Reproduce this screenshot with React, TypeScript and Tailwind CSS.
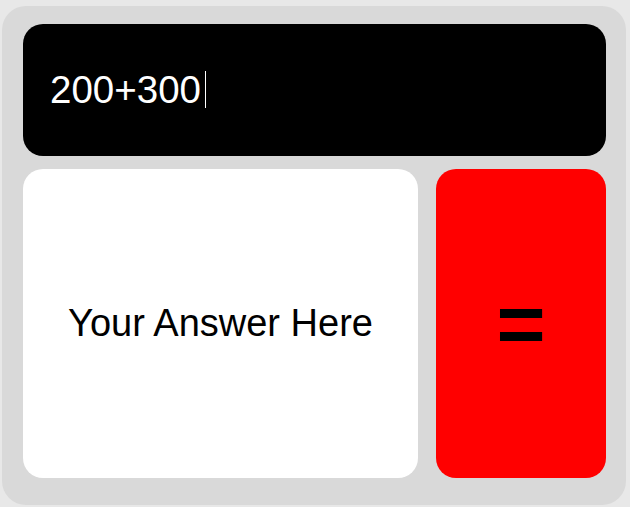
export default function App() {
  return (
    <div className="min-h-[507px] w-[630px] bg-[#e8e8e8] pl-[2px] pt-[6px] font-['Liberation_Sans',Arial,sans-serif]">
      <div className="flex h-[499px] w-[624px] flex-col gap-[13px] rounded-[24px] bg-[#d9d9d9] pb-[27px] pl-[21px] pr-[20px] pt-[18px]">
        <div className="flex h-[132px] items-center rounded-[20px] bg-black pl-[27px]">
          <span className="text-[38.5px] leading-none text-white">200+300</span>
          <span className="ml-[4px] mt-[-2px] h-[37px] w-[1px] bg-white" />
        </div>
        <div className="flex h-[309px] gap-[18px]">
          <div className="flex w-[395px] items-center justify-center rounded-[20px] bg-white">
            <span className="text-[38px] text-black">Your Answer Here</span>
          </div>
          <button className="flex w-[170px] items-center justify-center rounded-[20px] bg-[#ff0000]">
            <span className="text-[84px] font-bold leading-none text-black">=</span>
          </button>
        </div>
      </div>
    </div>
  );
}
